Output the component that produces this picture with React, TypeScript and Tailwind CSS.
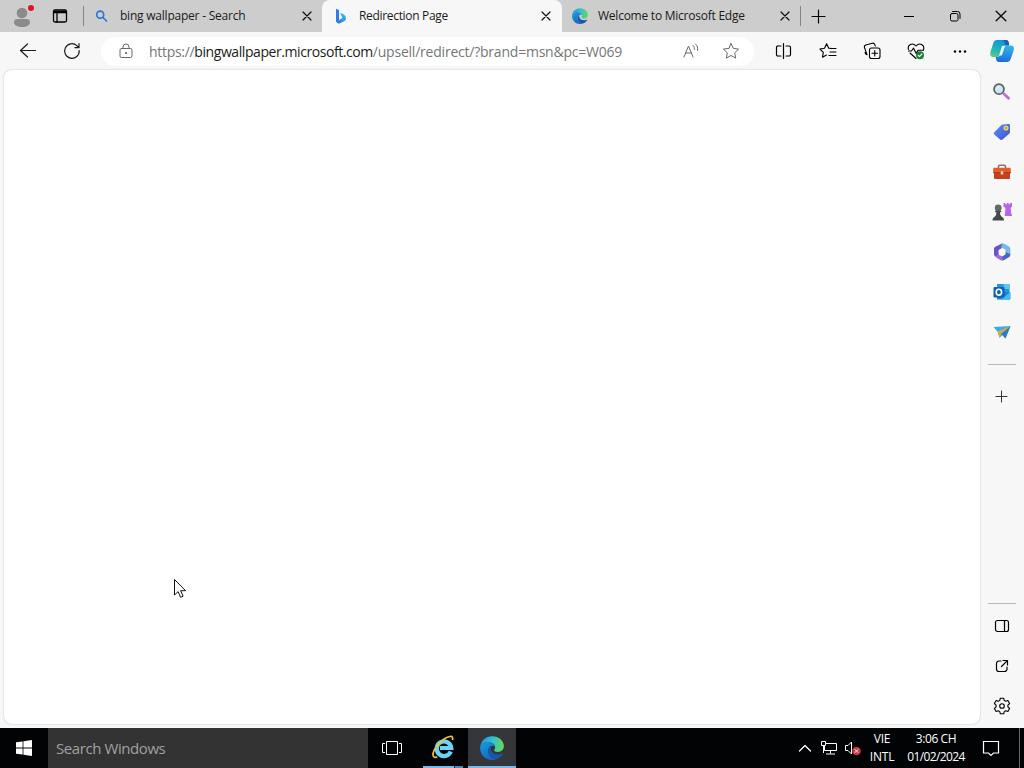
import React from 'react';

type IconProps = {
  size?: number;
  box?: number;
  className?: string;
  width?: number;
  children: React.ReactNode;
};

// Stroked icon on a square grid; box is the view box size
const Icon = ({ size = 16, box = 16, width = 1, className = '', children }: IconProps) => (
  <svg
    width={size}
    height={size}
    viewBox={`0 0 ${box} ${box}`}
    fill="none"
    stroke="currentColor"
    strokeWidth={width}
    strokeLinecap="round"
    strokeLinejoin="round"
    className={`block shrink-0 ${className}`}
  >
    {children}
  </svg>
);

const EdgeLogo = ({ size, id }: { size: number; id: string }) => (
  <svg width={size} height={size} viewBox="0 0 24 24" className="block shrink-0">
    <defs>
      <linearGradient id={`${id}-top`} x1="0" y1="0.4" x2="1" y2="0.5">
        <stop offset="0" stopColor="#2292d8" />
        <stop offset="0.5" stopColor="#35c1d0" />
        <stop offset="1" stopColor="#62d957" />
      </linearGradient>
      <linearGradient id={`${id}-left`} x1="0" y1="0" x2="0.6" y2="1">
        <stop offset="0" stopColor="#1b9de2" />
        <stop offset="1" stopColor="#1267bd" />
      </linearGradient>
    </defs>
    <path d="M0.2 11C0.8 4.6 5.8 0.2 12 0.2c7 0 11.9 5 11.9 9.8 0 3.6-2.7 5.9-5.9 5.9-2.7 0-3.9-.9-3.9-1.7 0-.6 1-1 1-2.9 0-2.6-2.9-5.3-6.9-5.3C3.8 6 1 8.500.2 11z" fill={`url(#${id}-top)`} />
    <path d="M.1 12C.2 8.400 3.600 6 8 6c4 0 6.900 2.600 7.100 5-.7-1-1.800-1.500-3.300-1.200-2.100.6-3.500 3-3.500 5.200 0 4.500 3.800 8.200 8.100 8.200-1.400.6-2.900.8-4.400.8C5.200 24 .1 18.700.1 12z" fill={`url(#${id}-left)`} />
    <path d="M11.800 9.800C9.600 10.400 8.300 12.800 8.300 15c0 4.500 3.800 8.200 8.100 8.200 2.600-.9 4.900-2.700 6.300-5 .3-.6-.2-.8-.7-.6-4.700 2.200-10.300.1-11-3.600-.3-1.800 0-3.200.8-4.200z" fill="#1756a8" />
  </svg>
);

const BingLogo = () => (
  <svg width="16" height="16" viewBox="0 0 16 16" className="block shrink-0">
    <defs>
      <linearGradient id="bing" x1="0" y1="1" x2="1" y2="0">
        <stop offset="0" stopColor="#2f6be0" />
        <stop offset="1" stopColor="#3fc0ec" />
      </linearGradient>
    </defs>
    <path d="M2 .8 5 1.900v10.700L2 14z" fill="#2d7ff0" />
    <path d="M2 12.300 5 12l3.500-2L6.300 5.100c3.500 1 5.700 2.400 5.700 5.200 0 1.600-.8 2.400-1.800 3L6 15.300c-2 .8-4-.6-4-3z" fill="url(#bing)" />
  </svg>
);

const CopilotLogo = () => (
  <svg width="24" height="24" viewBox="0 0 24 24" className="block shrink-0">
    <defs>
      <linearGradient id="cp-left" x1="0.5" y1="0" x2="0.2" y2="1">
        <stop offset="0" stopColor="#1791db" />
        <stop offset="0.6" stopColor="#22b9b2" />
        <stop offset="1" stopColor="#58cb8d" />
      </linearGradient>
      <linearGradient id="cp-right" x1="0.6" y1="0" x2="0.4" y2="1">
        <stop offset="0" stopColor="#2bb9ed" />
        <stop offset="1" stopColor="#2169db" />
      </linearGradient>
    </defs>
    <path d="M7 1h9c2 0 2.700 1.500 3.200 4L15 6.500c-2 0-2.600 1.300-3.100 3l-2 6.500c-.5 1.500-1.400 2-3 2H3C.2 18-.2 15.600.6 12.600L3.300 4C4 2 5.200 1 7 1z" fill="url(#cp-left)" />
    <path d="M17 23H9c-2.200 0-2.800-1.700-3.300-5H7c1.600 0 2.500-.5 3-2l2.400-7c.5-1.700 1.100-2.500 3.100-2.500H21c3 0 3.300 2.500 2.500 5.500L20.700 20c-.7 2-1.900 3-3.700 3z" fill="url(#cp-right)" />
    <path d="m9 16.500 3-9.500h3l-3.200 9.500z" fill="#e9f9fc" />
    <path d="M13 1h3c2 0 2.700 1.500 3.200 5.500H16C14.500 6.500 14.800 2 13 1z" fill="#1763bb" />
  </svg>
);

const CloseIcon = ({ size = 10 }: { size?: number }) => (
  <Icon size={size} box={10} width={1.2} className="text-[#111]">
    <path d="m1 1 8 8M9 1 1 9" />
  </Icon>
);

const toolbarIcons = [
  {
    name: 'split',
    icon: (
      <Icon size={18} box={18} width={1.2}>
        <path d="M6 4H3.500A1.500 1.500 0 0 0 1.500 5.500v7A1.500 1.500 0 0 0 3.500 14H6M11 4h3a1.500 1.500 0 0 1 1.500 1.500v7A1.500 1.500 0 0 1 14 14h-3M8.500 1.500v15" />
      </Icon>
    )
  },
  {
    name: 'favorites',
    icon: (
      <Icon size={18} box={18} width={1.1}>
        <path d="M11.500 6.300H9.700L7.600 1.800 5.500 6.300.9 7l3.400 3.300-.8 4.900 3.900-2.200M11.300 6.500H17M11 10h6M9.800 13.500H17" />
      </Icon>
    )
  },
  {
    name: 'collections',
    icon: (
      <Icon size={18} box={18} width={1.1}>
        <rect x="6.500" y="6" width="10.500" height="10.500" rx="2" />
        <path d="M11.750 8.500v5.500M9 11.250h5.500M4 12.800 1.500 5.500A2 2 0 0 1 2.800 3l6.500-1.800A2 2 0 0 1 11.700 2.500l.7 1.500M4 12.800C3 12.500 2.300 11.500 2 10.500" />
      </Icon>
    )
  },
  {
    name: 'essentials',
    icon: (
      <Icon size={18} box={18} width={1.1}>
        <path d="M1.500 7.500C0 3 5.500 0 9 4c3.500-4 9-1 7.500 3.500M1.500 9h3l2-3 2.700 5.500L11 8.300h5.500M3 11l6 5.500" />
        <circle cx="13" cy="13.300" r="4" fill="#168334" stroke="none" />
        <path d="m11.200 13.400 1.200 1.200 2.500-2.600" stroke="#fff" />
      </Icon>
    )
  },
  {
    name: 'more',
    icon: (
      <Icon size={16}>
        <g fill="currentColor" stroke="none">
          <circle cx="3" cy="8.500" r="1.200" />
          <circle cx="8" cy="8.500" r="1.200" />
          <circle cx="13" cy="8.500" r="1.200" />
        </g>
      </Icon>
    )
  }
];

const sidebarApps = [
  {
    name: 'search',
    icon: (
      <Icon size={18} box={18}>
        <path d="m11 11 4.600 4.200" stroke="#c06bdc" strokeWidth="2.800" />
        <circle cx="6" cy="6.200" r="5" fill="#c9e6f1" stroke="#5c6063" strokeWidth="1.700" />
        <path d="M3.500 6A3 3 0 0 1 6 3.500" stroke="#fff" />
      </Icon>
    )
  },
  {
    name: 'shopping',
    icon: (
      <Icon size={18} box={18}>
        <defs>
          <linearGradient id="tag" x1="0" y1="0" x2="1" y2="1">
            <stop offset="0" stopColor="#5d91f4" />
            <stop offset="1" stopColor="#3c50d4" />
          </linearGradient>
        </defs>
        <path d="M10 1.500 15.500 1c1 0 1.500.5 1.500 1.400V9c0 .8-.2 1.200-.8 1.700L9.500 16.500c-.8.6-1.700.6-2.400-.1L1.300 11.500c-.7-.8-.7-1.500 0-2.200L8 2.500c.6-.6 1.200-.9 2-1z" fill="url(#tag)" stroke="none" />
        <circle cx="13" cy="5" r="1.800" fill="#8b9a86" stroke="#f3d454" strokeWidth="1.500" />
      </Icon>
    )
  },
  {
    name: 'tools',
    icon: (
      <Icon size={20} box={20}>
        <path d="M6.500 6V4.500c0-.8.500-1.200 1.200-1.200h4.600c.7 0 1.200.4 1.200 1.200V6" stroke="#75787b" strokeWidth="1.500" />
        <path d="M2.500 5.800h15c.8 0 1.300.6 1.300 1.300V11H1.200V7.100c0-.7.500-1.300 1.300-1.300z" fill="#e65c26" stroke="none" />
        <path d="M2 10.500h16v5.300c0 .8-.5 1.300-1.300 1.300H3.300c-.8 0-1.300-.5-1.300-1.300z" fill="#c7401c" stroke="none" />
        <path d="M1.500 10.700h17" stroke="#a93a18" />
        <rect x="8.700" y="9.300" width="2.600" height="3.200" rx=".6" fill="#dddddd" stroke="none" />
      </Icon>
    )
  },
  {
    name: 'games',
    icon: (
      <Icon size={20} box={20}>
        <path d="M11.500 1h1.800v1.300h1.500V1h1.900v1.300h1.500V1H20v3.500L18.700 6l.6 6c.7.500.9 1.200.9 2h-7.500l.8-8-2-1.500z" fill="#bb63e8" stroke="none" />
        <circle cx="6.200" cy="6" r="3.400" fill="#66696c" stroke="none" />
        <path d="M3.200 8.800h6v1.500H8c0 2.200.5 3.600 2 4.700 1.300.6 2 1.700 2 3.500H.5c0-1.800.6-2.900 2-3.500 1.400-1.100 1.900-2.500 1.900-4.700H3.200z" fill="#45484b" stroke="none" />
      </Icon>
    )
  },
  {
    name: 'microsoft365',
    icon: (
      <Icon size={18} box={18}>
        <g stroke="none">
          <path d="M9.500.5c1-.3 1.700 0 2.500.5l4 2.500c1 .6 1.300 1.300 1.300 2.500v5l-5-2.500V6.500L6 3.500z" fill="#72bee2" />
          <path d="M7 1.500C8 .8 9 .4 10 .5 8.500 1.300 8.500 2 8.500 3.500v2L5.700 7.300V12L3 13.500C1.500 13 1 12.200 1 11V6c0-1 .4-1.700 1.300-2.200z" fill="#6554cc" />
          <path d="m3 13.500 3-1.800 3.200 1.800 8-3.500v2c0 1-.5 1.800-1.400 2.300l-5 3c-1 .6-2 .6-3 0l-4.600-2.700c-1-.6-1.700-1.400-1.700-2.300.3.800 1 1.200 1.500 1.200z" fill="#a568cf" />
          <path d="M12.300 8.500v3.200L9.200 13.500l1 3.800 5.500-3.200c1-.6 1.600-1.600 1.600-2.900z" fill="#4168ce" />
          <path d="m9.100 5.300 3.200 1.800v3.800l-3.200 1.800-3.300-1.800V7.100z" fill="#fafafa" />
        </g>
      </Icon>
    )
  },
  {
    name: 'outlook',
    icon: (
      <Icon size={18} box={18}>
        <g stroke="none">
          <path d="M4 1h12.500v10H4z" fill="#2196db" />
          <path d="M10.500 1h6v5h-6z" fill="#54c8f2" />
          <path d="M4 9.500h13.300v7H4z" fill="#187fca" />
          <path d="m17.300 9-9.300 7.500h8.300c.6 0 1-.4 1-1z" fill="#43bdef" />
          <rect x=".5" y="4" width="11" height="10.500" rx="1" fill="#0f62b0" />
        </g>
        <ellipse cx="5.900" cy="9.200" rx="2.700" ry="2.900" stroke="#fff" strokeWidth="1.600" />
      </Icon>
    )
  },
  {
    name: 'drop',
    icon: (
      <Icon size={18} box={18}>
        <g stroke="none">
          <path d="m.5 4 17-1L12.500 15.500 9.500 12l-3 3L5 9.300z" fill="#3faae5" />
          <path d="m17.500 3-5 12.500L8 10.700z" fill="#247fc7" />
          <path d="M17.500 3 4.500 8.500l2 6.500L8 10.700z" fill="#d7aa45" />
        </g>
      </Icon>
    )
  }
];

const sidebarTools = [
  {
    name: 'hide sidebar',
    icon: (
      <Icon width={1.200}>
        <rect x="1.500" y="2.500" width="13" height="11" rx="2" />
        <path d="M10.500 2.500v11" />
      </Icon>
    )
  },
  {
    name: 'open link',
    icon: (
      <Icon width={1.200}>
        <path d="M7 3H5a2.500 2.500 0 0 0-2.500 2.500v5.500A2.500 2.500 0 0 0 5 13.500h5.500A2.500 2.500 0 0 0 13 11V9M9 2.500h4.500V7M13.300 2.700 7.500 8.500" />
      </Icon>
    )
  },
  {
    name: 'settings',
    icon: (
      <Icon size={18} box={18} width={1.100}>
        <path d="m7.300 1.200-.5 2.200-1.500.9-2.200-.8-1.700 3 1.700 1.600v1.800L1.400 11.500l1.700 3 2.200-.8 1.500.9.500 2.200h3.400l.5-2.200 1.500-.9 2.200.8 1.700-3-1.700-1.600V8.100l1.700-1.600-1.700-3-2.200.8-1.500-.9-.5-2.200z" />
        <circle cx="9" cy="9" r="2.300" />
      </Icon>
    )
  }
];

const TabBar = () => (
  <header className="flex h-8 bg-[#cdcdcd] text-[12px] text-[#1b1b1b]">
    <div className="flex w-[83px] shrink-0 items-center">
      <svg width="24" height="24" viewBox="0 0 24 24" className="ml-[11px] block">
        <circle cx="11" cy="9" r="5.300" fill="#8d8b8a" />
        <path d="M3 18.500c0-2.500 1.200-3.500 3.500-3.500h9c2.300 0 3.500 1 3.500 3.500 0 2.600-3.500 4.500-8 4.500s-8-1.900-8-4.500z" fill="#8d8b8a" />
        <circle cx="20" cy="4" r="3" fill="#dc1624" />
      </svg>
      <Icon className="ml-[17px] text-black" width={1.300}>
        <rect x="1.500" y="2" width="13" height="12" rx="1.500" />
        <path d="M2 3.500h12M2 4.500h12M5 5v9" />
      </Icon>
    </div>
    <div className="mt-1.5 h-5 w-px bg-[#858585]" />
    <div className="flex w-[238px] items-center pl-[10px] pr-[10px]">
      <Icon className="text-[#3276d2]" width={1.700}>
        <circle cx="6.200" cy="6.700" r="3.500" />
        <path d="m9 9.500 3.500 3.500" />
      </Icon>
      <span className="ml-[10px] flex-1 whitespace-nowrap tracking-[-0.22px]">bing wallpaper - Search</span>
      <CloseIcon />
    </div>
    <div className="flex w-[240px] items-center rounded-t-lg bg-[#f7f7f7] pl-[12px] pr-[11px]">
      <BingLogo />
      <span className="ml-[9px] flex-1 whitespace-nowrap tracking-[-0.32px]">Redirection Page</span>
      <CloseIcon />
    </div>
    <div className="flex w-[238px] items-center pl-[10px] pr-[10px]">
      <EdgeLogo size={16} id="edge-tab" />
      <span className="ml-[10px] flex-1 whitespace-nowrap tracking-[-0.24px]">Welcome to Microsoft Edge</span>
      <CloseIcon />
    </div>
    <div className="mt-1.5 h-5 w-px bg-[#858585]" />
    <div className="ml-[9px] flex items-center text-black">
      <Icon width={1.200}>
        <path d="M8.500 2v13M2 8.500h13" />
      </Icon>
    </div>
    <div className="ml-auto flex text-black">
      <div className="flex w-[46px] items-center justify-center">
        <span className="h-px w-[10px] bg-black" />
      </div>
      <div className="flex w-[46px] items-center justify-center">
        <Icon size={12} box={12}>
          <rect x="1.500" y="3.500" width="7.500" height="7.500" rx="1.500" />
          <path d="M3.500 1.500H8.500A2.500 2.500 0 0 1 11 4v4.500" />
        </Icon>
      </div>
      <div className="flex w-[46px] items-center justify-center">
        <CloseIcon size={12} />
      </div>
    </div>
  </header>
);

const Toolbar = () => (
  <div className="flex h-[38px] items-center text-[#1b1b1b]">
    <div className="flex w-[101px] gap-[26px] pl-[19px]">
      <Icon size={18} box={18} width={1.200}>
        <path d="M16.500 8.500h-15M8.500 2 1.500 8.500l7 6.500" />
      </Icon>
      <Icon size={18} box={18} width={1.200}>
        <path d="M16.200 8.500A7.300 7.300 0 1 1 13.800 3.600L16 5.700M16 1.700v4h-4" />
      </Icon>
    </div>
    <div className="flex h-[29px] w-[653px] items-center rounded-full bg-white">
      <Icon className="ml-[17px] text-[#686868]">
        <rect x="2" y="5.500" width="12" height="9" rx="1.500" />
        <path d="M5 5.500V4a3 3 0 0 1 6 0v1.500" />
        <circle cx="8" cy="10" r=".6" fill="currentColor" />
      </Icon>
      <div className="ml-[15px] flex-1 whitespace-nowrap text-[14px] tracking-[-0.22px] text-[#767676]">
        <span className="tracking-[-0.3px]">https://</span>
        <span className="tracking-[-0.43px] text-[#1b1b1b]">bingwallpaper.microsoft.com</span>
        /upsell/redirect/?brand=msn&amp;pc=W069
      </div>
      <Icon className="mr-[23px] text-[#686868]">
        <path d="M1 14 5.500 3 10 14M2.600 10h5.800M10 2.500c1.200 1 1.600 2.400 1.300 4M12.500 1c2 1.600 2.600 4 2 6.500" />
      </Icon>
      <Icon size={18} box={18} className="mr-[14px] text-[#686868]">
        <path d="m9 1.500 2.300 4.900 5.300.7-3.900 3.700 1 5.300L9 13.500l-4.700 2.600 1-5.300L1.400 7.100l5.300-.7z" />
      </Icon>
    </div>
    <div className="ml-[8px] flex text-black">
      {toolbarIcons.map((item) => (
        <div key={item.name} className="flex w-11 items-center justify-center">
          {item.icon}
        </div>
      ))}
    </div>
    <div className="ml-[8px]">
      <CopilotLogo />
    </div>
  </div>
);

const Sidebar = () => (
  <aside className="flex w-11 flex-col items-center text-black">
    <div className="flex flex-col pt-[2px]">
      {sidebarApps.map((app) => (
        <div key={app.name} className="flex h-10 w-10 items-center justify-center">
          {app.icon}
        </div>
      ))}
    </div>
    <div className="mt-[12px] h-px w-7 bg-[#b9b9b9]" />
    <Icon size={14} box={14} className="mt-[25px] text-[#333]">
      <path d="M6.500 1v11M1 6.500h11" />
    </Icon>
    <div className="mt-auto h-px w-7 bg-[#b9b9b9]" />
    <div className="flex flex-col pb-[2px] pt-[2px]">
      {sidebarTools.map((tool) => (
        <div key={tool.name} className="flex h-10 w-10 items-center justify-center">
          {tool.icon}
        </div>
      ))}
    </div>
  </aside>
);

const Taskbar = () => (
  <footer className="flex h-10 bg-[#020305] text-white">
    <div className="flex w-12 items-center justify-center">
      <svg width="16" height="16" viewBox="0 0 16 16" fill="#fff">
        <path d="M0 2.300 6.600 1.400v6.200H0zM7.400 1.300 16 0v7.600H7.400zM0 8.400h6.600v6.200L0 13.700zM7.400 8.400H16V16l-8.600-1.300z" />
      </svg>
    </div>
    <div className="flex w-80 items-center bg-[#333] pl-2 text-[15px] tracking-[-0.42px] text-[#a0a0a0]">
      Search Windows
    </div>
    <div className="flex w-12 items-center justify-center">
      <svg width="20" height="14" viewBox="0 0 20 14" fill="none" stroke="#fff" className="block">
        <path d="M4.500.5h11v13h-11zM3 2.500H.5v9H3M17 2.500h2.500v9H17" />
      </svg>
    </div>
    <div className="ml-[7px] flex w-10 flex-col items-center">
      <svg width="24" height="24" viewBox="0 0 24 24" fill="none" className="mt-[7px] block">
        <path d="M19.800 16.500A7.300 7.300 0 1 1 20.300 13H9" stroke="#6bd3f5" strokeWidth="4.200" />
        <path d="M3 22C-1 18 10 3 19 1.500c2.500-.4 3 1 2.500 3.500M3 22c.8.500 2 .4 3.300-.3" stroke="#f4c33a" strokeWidth="1.700" />
      </svg>
      <div className="mt-auto flex h-[2px] w-full bg-[#76b9ed]">
        <span className="ml-auto w-[9px] border-l border-[#1c2c3a] bg-[#5588b4]" />
      </div>
    </div>
    <div className="ml-[5px] flex w-12 flex-col items-center bg-[#34363a]">
      <div className="mt-[8px]">
        <EdgeLogo size={24} id="edge-task" />
      </div>
      <div className="mt-auto h-[2px] w-full bg-[#76b9ed]" />
    </div>
    <div className="ml-auto flex items-center">
      <Icon size={14} box={14} width={1.300}>
        <path d="m1.500 10 5.500-5.500 5.500 5.500" />
      </Icon>
      <svg width="18" height="16" viewBox="0 0 18 16" fill="none" stroke="#fff" className="ml-[8px] block">
        <path d="M6 3.500h10.500v7H4.500V6M10.500 10.500v3M6 14h9M1.500 1.500h4v4h-4zM3.500 5.500V13" />
      </svg>
      <svg width="18" height="16" viewBox="0 0 18 16" fill="none" stroke="#fff" className="ml-[6px] block">
        <path d="M1.500 5.500H4L7.500 2v12L4 10.500H1.500z" />
        <circle cx="12.500" cy="11" r="4.300" fill="#c93843" stroke="none" />
        <path d="m10.800 9.300 3.400 3.400M14.200 9.300l-3.400 3.400" />
      </svg>
      <div className="mb-px ml-[5px] w-[30px] text-center text-[12px] leading-[18px] tracking-[-0.2px]">
        <div>VIE</div>
        <div>INTL</div>
      </div>
      <div className="mb-px ml-[6px] w-[66px] whitespace-nowrap text-center text-[12px] leading-[18px] tracking-[-0.6px]">
        <div className="tracking-[-0.4px]">3:06 CH</div>
        <div>01/02/2024</div>
      </div>
      <svg width="18" height="18" viewBox="0 0 18 18" fill="none" stroke="#fff" strokeWidth="1.200" className="ml-[13px] mr-[19px] block">
        <path d="M1.500 2.500h15v11.500h-5L9 16.500 6.500 14h-5z" />
      </svg>
      <div className="mr-[4px] h-10 w-px bg-[#62666b]" />
    </div>
  </footer>
);

const App = () => {
  return (
    <div className="relative flex h-[768px] w-[1024px] flex-col overflow-hidden bg-[#f7f7f7] font-['Open_Sans','Noto_Sans',sans-serif]">
      <TabBar />
      <Toolbar />
      <div className="flex flex-1">
        <main className="mb-1 ml-1 flex-1 rounded-lg bg-white shadow-[0_0_2px_rgba(0,0,0,0.25)]" />
        <Sidebar />
      </div>
      <Taskbar />

      {/* Mouse pointer */}
      <svg width="14" height="21" viewBox="0 0 14 21" className="absolute left-[173px] top-[578px]">
        <path d="M1.500 1.500v15.500l3.600-3.400 2.500 5.700 2.500-1.100-2.500-5.500h5z" fill="#fff" stroke="#111" strokeWidth="1" />
      </svg>
    </div>
  );
};

export default App;
